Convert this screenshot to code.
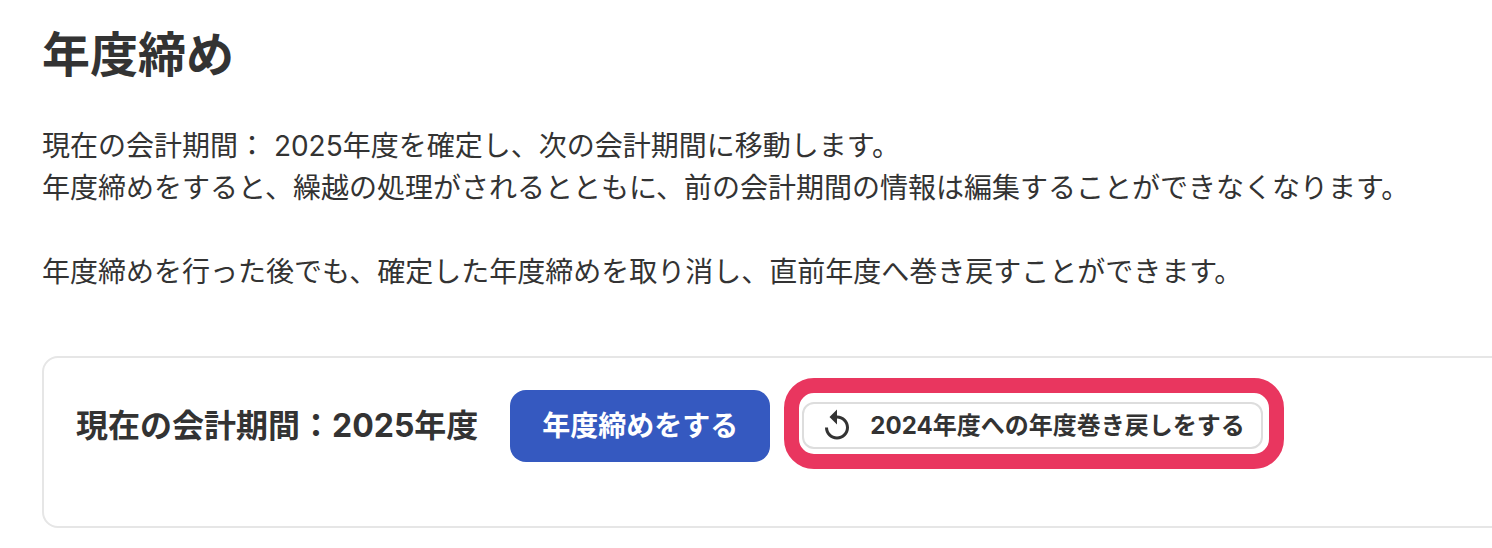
<div class="page">
  <h1>年度締め</h1>
  <p class="desc">現在の会計期間： 2025年度を確定し、次の会計期間に移動します。<br />年度締めをすると、繰越の処理がされるとともに、前の会計期間の情報は編集することができなくなります。<br /><br />年度締めを行った後でも、確定した年度締めを取り消し、直前年度へ巻き戻すことができます。</p>
  <section class="card">
    <span class="label">現在の会計期間：2025年度</span>
    <button class="primary">年度締めをする</button>
    <div class="highlight">
      <button class="secondary">
        <svg width="36" height="36" viewBox="0 0 24 24" fill="#333"><path d="M12 5V1L7 6l5 5V7c3.31 0 6 2.69 6 6s-2.69 6-6 6-6-2.69-6-6H4c0 4.42 3.58 8 8 8s8-3.58 8-8-3.58-8-8-8z"/></svg>
        <span class="sec-text">2024年度への年度巻き戻しをする</span>
      </button>
    </div>
  </section>
</div>

<style>
  :global(body) { margin: 0; background: #fff; overflow: hidden; }
  .page { font-family: Inter, "Noto Sans CJK JP", sans-serif; color: #333; padding: 24px 0 0 42px; }
  h1 { margin: 0; font-size: 48px; line-height: 62px; font-weight: 700; }
  .desc { margin: 39px 0 0; font-size: 28px; line-height: 42px; }
  .card { margin-top: 63px; width: 1480px; height: 172px; box-sizing: border-box; border: 2px solid #e6e6e6; border-radius: 16px; padding: 32px 0 0 32px; display: flex; align-items: flex-start; }
  .label { font-size: 32px; font-weight: 700; line-height: 72px; margin-right: 32px; white-space: nowrap; }
  .primary { width: 260px; height: 72px; flex: none; border: 0; border-radius: 16px; padding: 0 0 4px; background: #3559c0; color: #fff; font: 700 28px Inter, "Noto Sans CJK JP", sans-serif; }
  .highlight { margin: -12px 0 0 14px; border: 15px solid #e9365f; border-radius: 30px; padding: 9px 6px 5px 3px; background: #fff; flex: none; }
  .secondary { display: flex; align-items: center; gap: 15px; box-sizing: border-box; height: 47px; padding: 0 16px 0 15px; background: #fff; border: 2px solid #ddd; border-radius: 12px; color: #333; font: 700 24px Inter, "Noto Sans CJK JP", sans-serif; white-space: nowrap; }
  .sec-text { padding-bottom: 4px; }
</style>
